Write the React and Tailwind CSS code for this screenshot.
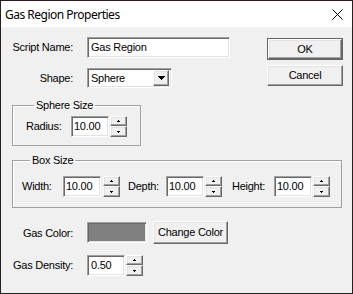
import React from "react";

const SUNK =
  "border border-t-[#a0a0a0] border-l-[#a0a0a0] border-b-white border-r-white shadow-[inset_1px_1px_0_#696969,inset_-1px_-1px_0_#e3e3e3] flex items-center";
const EDIT = "bg-white " + SUNK;
const BTN =
  "bg-[#f0f0f0] border border-t-white border-l-white border-b-[#696969] border-r-[#696969] shadow-[inset_-1px_-1px_0_#a0a0a0,inset_1px_1px_0_#e3e3e3] flex items-center justify-center";

function ArrowUp() {
  return (
    <svg width="3" height="2" shapeRendering="crispEdges">
      <rect x="1" y="0" width="1" height="1" fill="#000" />
      <rect x="0" y="1" width="3" height="1" fill="#000" />
    </svg>
  );
}
function ArrowDown() {
  return (
    <svg width="3" height="2" shapeRendering="crispEdges">
      <rect x="0" y="0" width="3" height="1" fill="#000" />
      <rect x="1" y="1" width="1" height="1" fill="#000" />
    </svg>
  );
}

function Spin() {
  return (
    <div className="flex flex-col w-[17px] h-[21px]">
      <div className={BTN + " h-[10px]"}>
        <ArrowUp />
      </div>
      <div className={BTN + " h-[11px]"}>
        <ArrowDown />
      </div>
    </div>
  );
}

function NumField({ value }) {
  return (
    <div className={EDIT + " w-[38px] h-[21px] pl-[2px]"}>
      <span>{value}</span>
    </div>
  );
}

export default function App() {
  return (
    <div className="w-[353px] h-[294px] border border-[#2b1d1d] bg-[#f0f0f0] flex flex-col font-['Liberation_Sans',Arial,sans-serif] text-[11px] leading-[13px] tracking-[-0.25px] text-black overflow-hidden">
      <div className="h-[26px] bg-white flex items-center justify-between pl-[4px] pr-[9px] shrink-0">
        <span className="font-['Noto_Sans',sans-serif] text-[12px] tracking-[-0.5px]">
          Gas Region Properties
        </span>
        <svg width="11" height="11">
          <line x1="0.5" y1="0.5" x2="10.5" y2="10.5" stroke="#000" strokeWidth="1" />
          <line x1="10.5" y1="0.5" x2="0.5" y2="10.5" stroke="#000" strokeWidth="1" />
        </svg>
      </div>

      <div className="flex-1 flex flex-col">
        {/* top section */}
        <div className="flex pt-[10px]">
          <div className="flex flex-col">
            <div className="flex items-center h-[21px]">
              <span className="w-[72px] text-right">Script Name:</span>
              <div className={EDIT + " ml-[14px] w-[143px] h-[21px] pl-[3px]"}>
                <span>Gas Region</span>
              </div>
            </div>
            <div className="flex items-center h-[20px] mt-[10px]">
              <span className="w-[72px] text-right">Shape:</span>
              <div className={EDIT + " ml-[14px] w-[85px] h-[20px] pl-[3px] pr-[2px] justify-between"}>
                <span>Sphere</span>
                <div className={BTN + " w-[16px] h-[16px]"}>
                  <svg width="7" height="4" shapeRendering="crispEdges">
                    <rect x="0" y="0" width="7" height="1" fill="#000" />
                    <rect x="1" y="1" width="5" height="1" fill="#000" />
                    <rect x="2" y="2" width="3" height="1" fill="#000" />
                    <rect x="3" y="3" width="1" height="1" fill="#000" />
                  </svg>
                </div>
              </div>
            </div>
          </div>
          <div className="flex flex-col ml-[37px] pt-[1px]">
            <div className="w-[76px] h-[22px] border border-[#646464] flex">
              <div className={BTN + " flex-1"}>OK</div>
            </div>
            <div className={BTN + " w-[76px] h-[21px] mt-[5px]"}>Cancel</div>
          </div>
        </div>

        {/* Sphere size */}
        <fieldset className="ml-[11px] mt-[11px] w-[129px] border border-[#a0a0a0] shadow-[inset_1px_1px_0_#fff] pt-[4px] pb-[8px] pl-[13px]">
          <legend className="ml-[8px] px-[2px] leading-[13px]">Sphere Size</legend>
          <div className="flex items-center">
            <span className="w-[45px]">Radius:</span>
            <NumField value="10.00" />
            <div className="ml-[1px]">
              <Spin />
            </div>
          </div>
        </fieldset>

        {/* Box size */}
        <fieldset className="ml-[11px] mt-[8px] w-[330px] border border-[#a0a0a0] shadow-[inset_1px_1px_0_#fff] pt-[9px] pb-[10px] pl-[9px]">
          <legend className="ml-[8px] px-[2px] leading-[13px]">Box Size</legend>
          <div className="flex items-center">
            <span className="w-[41px]">Width:</span>
            <NumField value="10.00" />
            <div className="ml-[2px]">
              <Spin />
            </div>
            <span className="ml-[8px] w-[38px]">Depth:</span>
            <NumField value="10.00" />
            <div className="ml-[1px]">
              <Spin />
            </div>
            <span className="ml-[10px] w-[42px]">Height:</span>
            <NumField value="10.00" />
            <div className="ml-[1px]">
              <Spin />
            </div>
          </div>
        </fieldset>

        {/* Gas color */}
        <div className="flex items-center h-[23px] mt-[13px]">
          <span className="w-[72px] text-right pt-[2px]">Gas Color:</span>
          <div className={SUNK + " bg-[#808080] ml-[14px] w-[60px] h-[21px]"}></div>
          <div className={BTN + " ml-[6px] w-[75px] h-[23px]"}>Change Color</div>
        </div>

        {/* Gas density */}
        <div className="flex items-center h-[21px] mt-[11px]">
          <span className="w-[72px] text-right">Gas Density:</span>
          <div className={EDIT + " ml-[14px] w-[38px] h-[21px] pl-[3px]"}>
            <span>0.50</span>
          </div>
          <div className="ml-[1px]">
            <Spin />
          </div>
        </div>
      </div>
    </div>
  );
}
